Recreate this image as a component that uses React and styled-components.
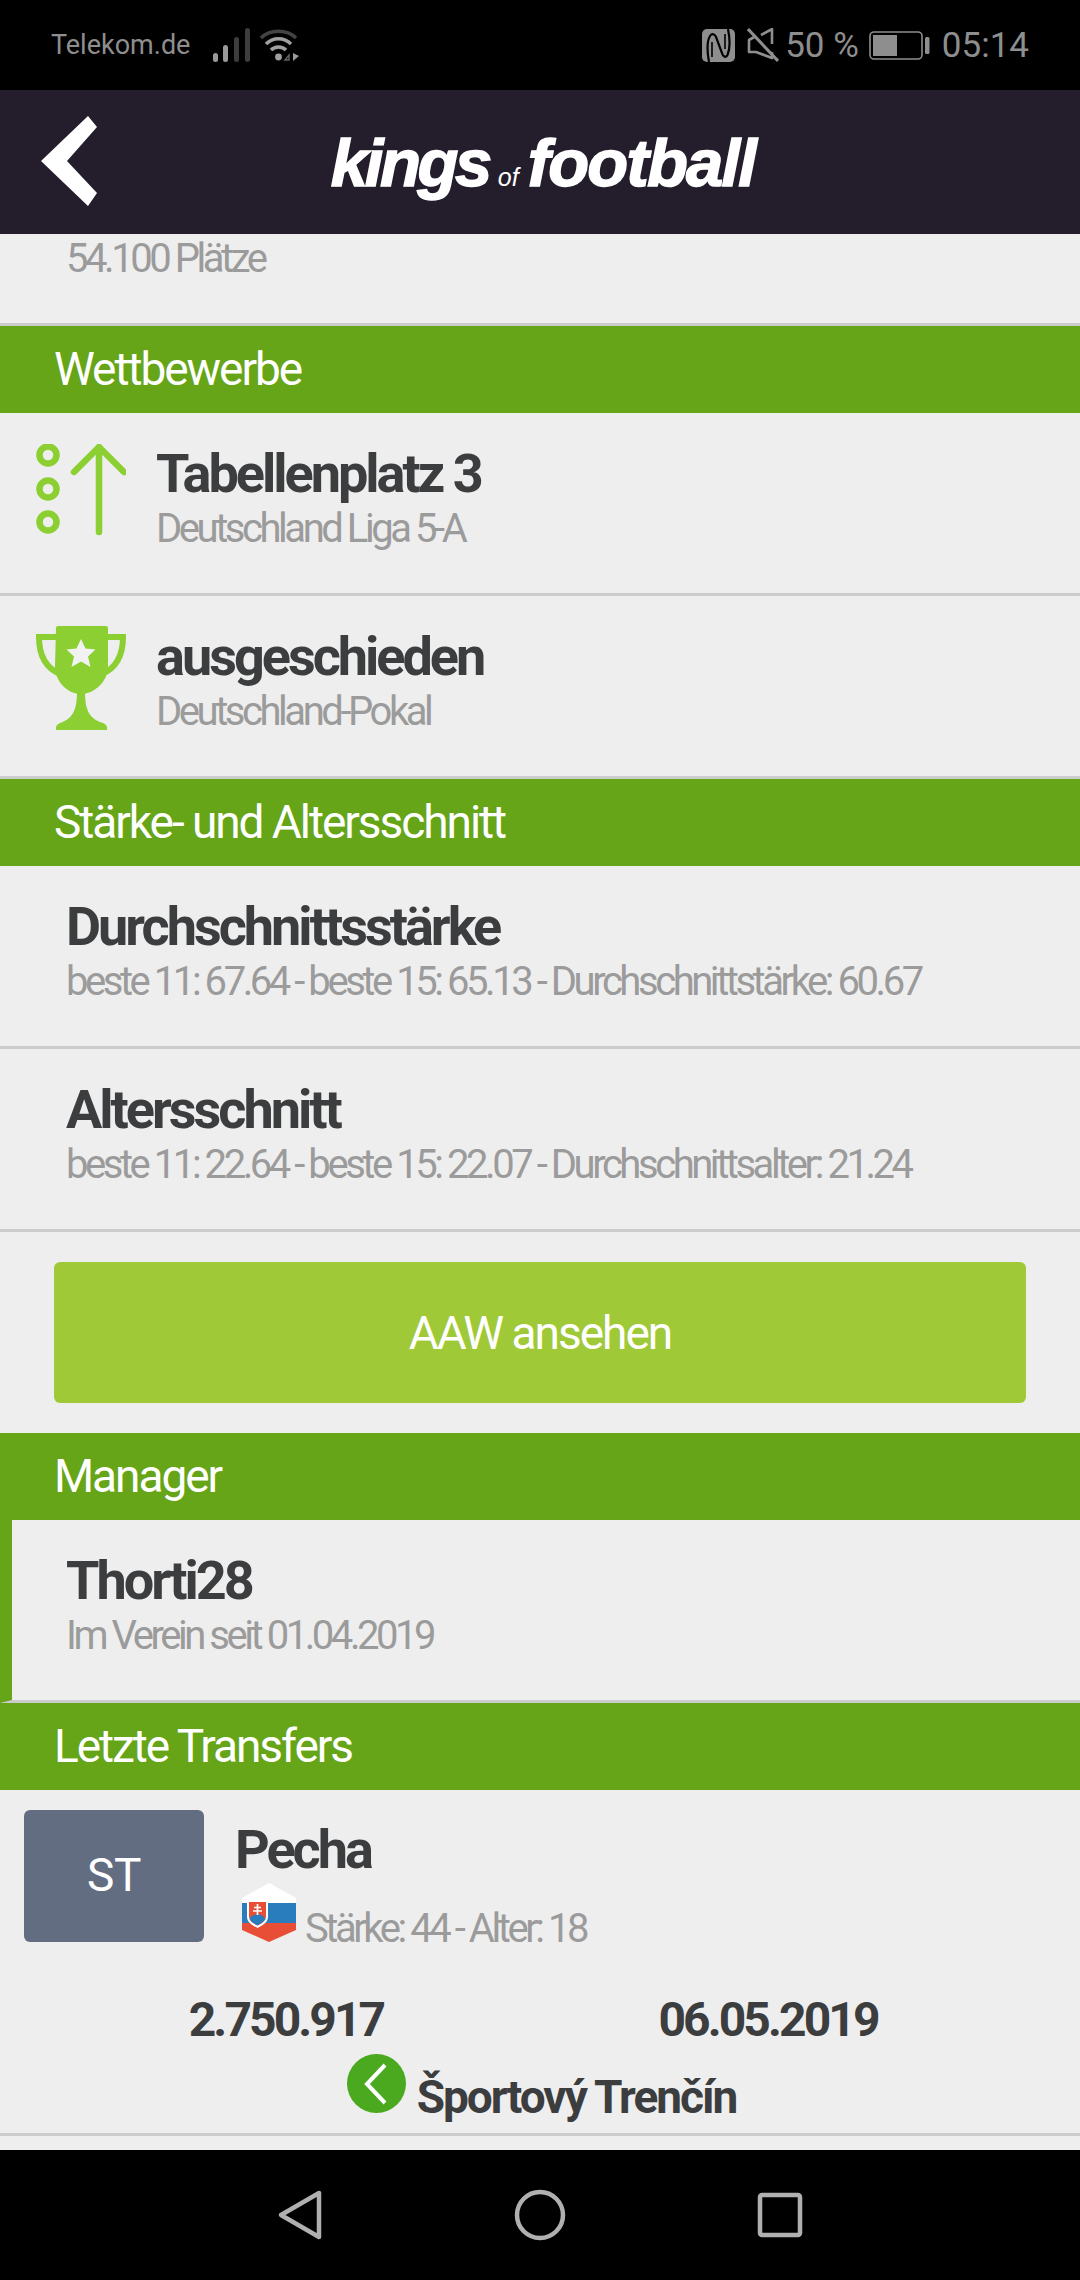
import styled, { createGlobalStyle } from "styled-components";

const GlobalStyle = createGlobalStyle`
  html, body {
    margin: 0;
    padding: 0;
    background: #eeeeee;
  }
  body {
    font-family: Roboto, "Liberation Sans", sans-serif;
  }
`;

const Screen = styled.div`
  width: 1080px;
  height: 2280px;
  display: flex;
  flex-direction: column;
  overflow: hidden;
  background: #eeeeee;
`;

const StatusBar = styled.div`
  height: 90px;
  flex: none;
  background: #000;
  color: #8e8e8e;
  display: flex;
  align-items: center;
  justify-content: space-between;
  padding: 0 51px 0 51px;
`;

const StatusGroup = styled.div`
  display: flex;
  align-items: center;
`;

const Carrier = styled.span`
  font-size: 27px;
  margin-right: 23px;
`;

const StatusText = styled.span`
  font-size: 35px;
  white-space: nowrap;
  margin: ${(p) => p.$margin || "0"};
`;

const Header = styled.div`
  height: 144px;
  flex: none;
  background: #231d2c;
  display: grid;
  grid-template-columns: 1fr auto 1fr;
  align-items: center;
`;

const BackIcon = styled.svg`
  width: 60px;
  height: 92px;
  margin-left: 40px;
  display: block;
`;

const Logo = styled.div`
  color: #fff;
  font-family: "Liberation Sans", Arial, sans-serif;
  font-weight: 700;
  font-style: italic;
  font-size: 67px;
  -webkit-text-stroke: 1.5px #fff;
  white-space: nowrap;
  margin-left: 6px;
`;

const LogoWord = styled.span`
  letter-spacing: ${(p) => p.$spacing};
`;

const LogoOf = styled.span`
  font-size: 25px;
  font-weight: 400;
  -webkit-text-stroke: 0;
  margin: 0 9px 0 9px;
`;

const Content = styled.div`
  flex: 1;
  min-height: 0;
`;

const StubRow = styled.div`
  padding: 0 0 39px 66px;
  border-bottom: 3px solid #cccccc;
`;

const SectionHead = styled.div`
  height: 87px;
  line-height: 87px;
  background: #65a517;
  color: #fff;
  font-size: 46px;
  letter-spacing: -2.05px;
  padding-left: 54px;
`;

const Row = styled.div`
  height: 183px;
  box-sizing: border-box;
  display: flex;
  align-items: flex-start;
  padding: 31px 0 0 ${(p) => (p.$icon ? "36px" : "66px")};
  border-bottom: 3px solid #cccccc;
  ${(p) => p.$accent && "border-left: 12px solid #65a517; padding-left: 54px;"}
`;

const RowIcon = styled.svg`
  width: 90px;
  flex: none;
  margin-right: 30px;
  display: block;
`;

const Title = styled.div`
  font-size: 54px;
  line-height: 60px;
  font-weight: 700;
  color: #3c3d3f;
  letter-spacing: -3px;
  white-space: nowrap;
`;

const Sub = styled.div`
  font-size: 40px;
  line-height: 50px;
  color: #9b9b9b;
  letter-spacing: -3.45px;
  white-space: nowrap;
`;

const ButtonWrap = styled.div`
  padding: 30px 54px;
`;

const WideButton = styled.div`
  height: 141px;
  border-radius: 6px;
  background: #a0c938;
  color: #fff;
  font-size: 46px;
  letter-spacing: -2px;
  display: flex;
  align-items: center;
  justify-content: center;
`;

const Transfer = styled.div`
  height: 346px;
  box-sizing: border-box;
  padding-top: 20px;
  border-bottom: 3px solid #cccccc;
`;

const TransferTop = styled.div`
  display: flex;
  padding-left: 24px;
  gap: 31px;
`;

const PositionTile = styled.div`
  width: 180px;
  height: 132px;
  border-radius: 6px;
  background: #636d82;
  color: #fff;
  font-size: 46px;
  letter-spacing: -0.5px;
  padding-bottom: 2px;
  box-sizing: border-box;
  display: flex;
  align-items: center;
  justify-content: center;
`;

const PlayerInfo = styled.div`
  padding-top: 10px;
`;

const MetaRow = styled.div`
  height: 74px;
  display: flex;
  align-items: flex-end;
`;

const Flag = styled.svg`
  width: 54px;
  height: 59px;
  margin: 0 9px 12px 7px;
  display: block;
`;

const Stats = styled.div`
  display: grid;
  grid-template-columns: 482px 482px;
  padding-left: 45px;
  margin-top: 36px;
`;

const Stat = styled.div`
  font-size: 48px;
  line-height: 60px;
  font-weight: 700;
  color: #3c3d3f;
  letter-spacing: -2.9px;
  text-align: center;
`;

const ClubRow = styled.div`
  display: flex;
  justify-content: center;
  align-items: flex-end;
  gap: 11px;
  margin-top: 4px;
  padding-left: 3px;
`;

const ClubBadge = styled.div`
  width: 59px;
  height: 59px;
  border-radius: 50%;
  background: #4aa91f;
  margin-bottom: 14px;
  display: flex;
  align-items: center;
  justify-content: center;
`;

const ClubName = styled.div`
  font-size: 46px;
  line-height: 60px;
  font-weight: 700;
  color: #3c3d3f;
  letter-spacing: -2px;
`;

const NavBar = styled.div`
  height: 130px;
  flex: none;
  background: #000;
  display: grid;
  grid-template-columns: repeat(3, 240px);
  justify-content: center;
  align-items: center;
  justify-items: center;
`;

const NavIcon = styled.svg`
  width: 54px;
  height: 54px;
  display: block;
`;

const SignalIcon = () => (
  <svg width="37" height="34" viewBox="0 0 37 34" style={{ marginRight: 9 }}>
    <rect x="0" y="25" width="5" height="9" rx="2.5" fill="#9a9a9a" />
    <rect x="10" y="17" width="5" height="17" rx="2.5" fill="#9a9a9a" />
    <rect x="21" y="9" width="5" height="25" rx="2.5" fill="#3d3d3d" />
    <rect x="32" y="0" width="5" height="34" rx="2.5" fill="#3d3d3d" />
  </svg>
);

const WifiIcon = () => (
  <svg width="41" height="35" viewBox="0 0 41 35">
    <path d="M2 10 C11 1 28 1 37 10" fill="none" stroke="#444" strokeWidth="3.4" />
    <path d="M7 16 C14 9 25 9 32 16" fill="none" stroke="#a0a0a0" strokeWidth="3.4" />
    <path d="M12 22 C16 18 23 18 27 22" fill="none" stroke="#a0a0a0" strokeWidth="3.4" />
    <circle cx="19.5" cy="29" r="3.4" fill="#a0a0a0" />
    <path d="M30 32 L30 27 L26 32 Z" fill="none" stroke="#666" strokeWidth="1.4" />
    <path d="M34 25 V33 L40 28 Z" fill="#9a9a9a" />
  </svg>
);

const NfcIcon = () => (
  <svg width="33" height="33" viewBox="0 0 33 33" style={{ marginRight: 12 }}>
    <rect width="33" height="33" rx="5" fill="#8e8e8e" />
    <path
      d="M7 33 C5 22 5 12 8 7 C10 4 13 5 14 8 L20 24 C21 28 24 29 25.5 26 C28 20 28 10 26 0"
      fill="none"
      stroke="#000"
      strokeWidth="2.2"
    />
    <path d="M10 28 V13 M23 5 V20" fill="none" stroke="#000" strokeWidth="1.6" />
  </svg>
);

const MuteIcon = () => (
  <svg width="32" height="34" viewBox="0 0 32 34" style={{ marginRight: 6 }}>
    <path
      d="M9 8 L2 12 V24 H9 L25 30 V24 M25 16 V1 L14 7"
      fill="none"
      stroke="#8e8e8e"
      strokeWidth="2.6"
      strokeLinejoin="round"
    />
    <path d="M1 1 L31 33" stroke="#8e8e8e" strokeWidth="3" />
  </svg>
);

const BatteryIcon = () => (
  <svg width="61" height="29" viewBox="0 0 61 29">
    <rect x="1" y="1" width="52" height="27" rx="4" fill="none" stroke="#8e8e8e" strokeWidth="1.6" />
    <rect x="4" y="4" width="24" height="21" fill="#8e8e8e" />
    <rect x="56" y="6" width="4.5" height="17" rx="1.5" fill="#8e8e8e" />
  </svg>
);

const TableIcon = () => (
  <RowIcon height="92" viewBox="0 0 90 92">
    <circle cx="12" cy="11" r="8.5" fill="none" stroke="#8ccf32" strokeWidth="6.5" />
    <circle cx="12" cy="45" r="8.5" fill="none" stroke="#8ccf32" strokeWidth="6.5" />
    <circle cx="12" cy="78" r="8.5" fill="none" stroke="#8ccf32" strokeWidth="6.5" />
    <path
      d="M63 88 V3 M38 28 L63 3 L88 28"
      fill="none"
      stroke="#8ccf32"
      strokeWidth="6.5"
      strokeLinecap="round"
      strokeLinejoin="round"
    />
  </RowIcon>
);

const TrophyIcon = () => (
  <RowIcon height="104" viewBox="0 0 90 104" style={{ marginTop: -1 }}>
    <path
      d="M20 2 a2 2 0 0 1 2 -2 H70 a2 2 0 0 1 2 2 V40 C72 56 58 68 45 68 C32 68 19 56 19 40 Z"
      fill="#8ccf32"
    />
    <path
      d="M41 66 H49 C49 85 54 93 67 97 Q72 99 71 104 H20 Q19 99 24 97 C36 93 41 85 41 66 Z"
      fill="#8ccf32"
    />
    <path d="M20 11 H3 C3 30 10 42 24 48" fill="none" stroke="#8ccf32" strokeWidth="6" />
    <path d="M70 11 H87 C87 30 80 42 66 48" fill="none" stroke="#8ccf32" strokeWidth="6" />
    <polygon
      points="45,13 49.5,22.5 59.5,23.5 52,30.5 54.5,41 45,35.5 35.5,41 38,30.5 30.5,23.5 40.5,22.5"
      fill="#f2f2f2"
    />
  </RowIcon>
);

const SlovakFlag = () => (
  <Flag viewBox="0 0 54 59">
    <polygon points="27,0 54,15 54,20 0,20 0,15" fill="#fff" />
    <rect x="0" y="20" width="54" height="20" fill="#2a7dbd" />
    <polygon points="0,40 54,40 54,47 27,59 0,47" fill="#e84e36" />
    <path d="M5 17 H26 V34 C26 40 19 43 15.5 45 C12 43 5 40 5 34 Z" fill="#fff" />
    <path d="M7 19 H24 V33 C24 38 19 41 15.5 42.5 C12 41 7 38 7 33 Z" fill="#e84e36" />
    <path d="M7.5 36 C10 31 13 33 15.5 30 C18 33 21 31 23.5 36 C22 39 18 41 15.5 42.5 C13 41 9 39 7.5 36 Z" fill="#2a7dbd" />
    <path d="M15.5 21 V32 M12 24.5 H19 M11 28 H20" stroke="#fff" strokeWidth="1.7" fill="none" />
  </Flag>
);

const App = () => {
  return (
    <Screen>
      <GlobalStyle />
      <StatusBar>
        <StatusGroup>
          <Carrier>Telekom.de</Carrier>
          <SignalIcon />
          <WifiIcon />
        </StatusGroup>
        <StatusGroup>
          <NfcIcon />
          <MuteIcon />
          <StatusText $margin="0 10px 0 0">50 %</StatusText>
          <BatteryIcon />
          <StatusText $margin="0 0 0 12px">05:14</StatusText>
        </StatusGroup>
      </StatusBar>

      <Header>
        <BackIcon viewBox="0 0 60 92">
          <polygon points="48,0 57,11 27,45 57,77 48,90 1,45" fill="#fff" />
        </BackIcon>
        <Logo>
          <LogoWord $spacing="-3.4px">kings</LogoWord>
          <LogoOf>of</LogoOf>
          <LogoWord $spacing="-1.8px">football</LogoWord>
        </Logo>
      </Header>

      <Content>
        <StubRow>
          <Sub>54.100 Plätze</Sub>
        </StubRow>

        <SectionHead>Wettbewerbe</SectionHead>
        <Row $icon>
          <TableIcon />
          <div>
            <Title>Tabellenplatz 3</Title>
            <Sub>Deutschland Liga 5-A</Sub>
          </div>
        </Row>
        <Row $icon>
          <TrophyIcon />
          <div>
            <Title>ausgeschieden</Title>
            <Sub>Deutschland-Pokal</Sub>
          </div>
        </Row>

        <SectionHead>Stärke- und Altersschnitt</SectionHead>
        <Row>
          <div>
            <Title>Durchschnittsstärke</Title>
            <Sub>beste 11: 67.64 - beste 15: 65.13 - Durchschnittstärke: 60.67</Sub>
          </div>
        </Row>
        <Row>
          <div>
            <Title>Altersschnitt</Title>
            <Sub>beste 11: 22.64 - beste 15: 22.07 - Durchschnittsalter: 21.24</Sub>
          </div>
        </Row>

        <ButtonWrap>
          <WideButton>AAW ansehen</WideButton>
        </ButtonWrap>

        <SectionHead>Manager</SectionHead>
        <Row $accent>
          <div>
            <Title>Thorti28</Title>
            <Sub>Im Verein seit 01.04.2019</Sub>
          </div>
        </Row>

        <SectionHead>Letzte Transfers</SectionHead>
        <Transfer>
          <TransferTop>
            <PositionTile>ST</PositionTile>
            <PlayerInfo>
              <Title>Pecha</Title>
              <MetaRow>
                <SlovakFlag />
                <Sub>Stärke: 44 - Alter: 18</Sub>
              </MetaRow>
            </PlayerInfo>
          </TransferTop>
          <Stats>
            <Stat>2.750.917</Stat>
            <Stat>06.05.2019</Stat>
          </Stats>
          <ClubRow>
            <ClubBadge>
              <svg width="26" height="42" viewBox="0 0 26 42">
                <path d="M22 2 L4 21 L22 40" fill="none" stroke="#fff" strokeWidth="4" />
              </svg>
            </ClubBadge>
            <ClubName>Športový Trenčín</ClubName>
          </ClubRow>
        </Transfer>
      </Content>

      <NavBar>
        <NavIcon viewBox="0 0 54 54">
          <path
            d="M46 5 V49 L8 27 Z"
            fill="none"
            stroke="#b0b0b0"
            strokeWidth="4.5"
            strokeLinejoin="round"
          />
        </NavIcon>
        <NavIcon viewBox="0 0 54 54">
          <circle cx="27" cy="27" r="23" fill="none" stroke="#b0b0b0" strokeWidth="4.5" />
        </NavIcon>
        <NavIcon viewBox="0 0 54 54">
          <rect x="7" y="7" width="40" height="40" rx="2" fill="none" stroke="#b0b0b0" strokeWidth="4.5" />
        </NavIcon>
      </NavBar>
    </Screen>
  );
};

export default App;
